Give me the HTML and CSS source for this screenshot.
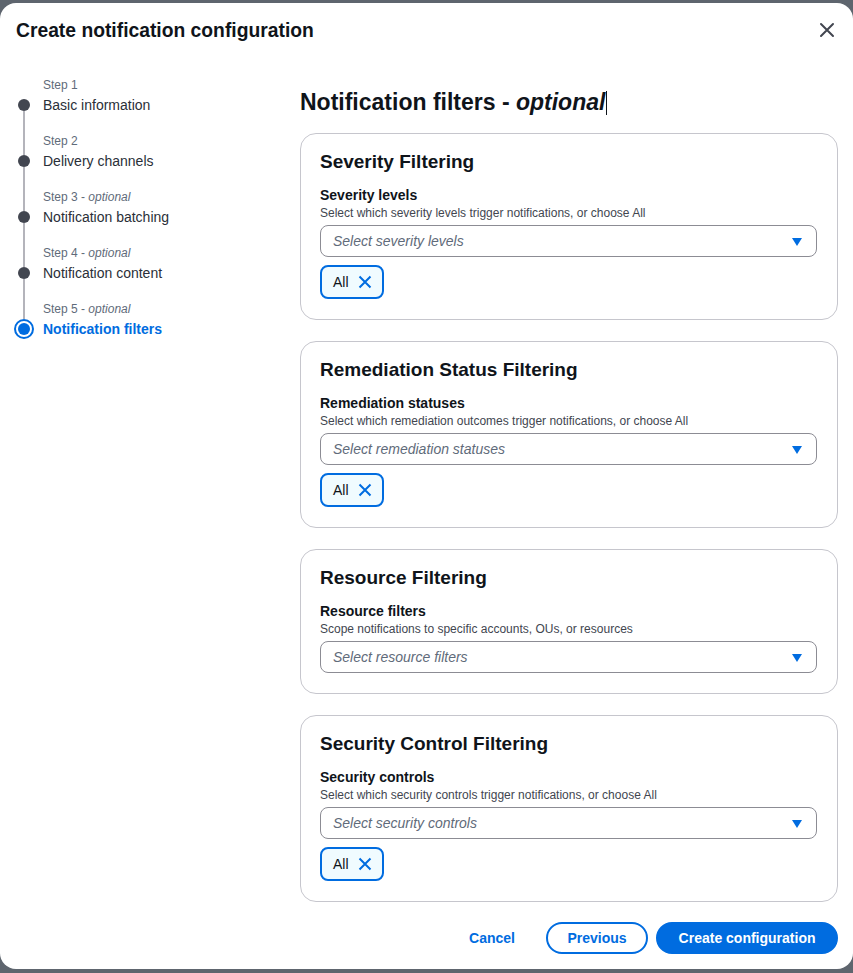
FILE: index.html
```html
<!DOCTYPE html>
<html lang="en">
<head>
<meta charset="utf-8">
<title>Create notification configuration</title>
<link rel="stylesheet" href="styles.css">
</head>
<body>
<div class="backdrop">
  <div class="modal">
    <header class="modal-header">
      <h1 class="modal-title">Create notification configuration</h1>
      <button class="close-btn" aria-label="Close">
        <svg width="16" height="16" viewBox="0 0 16 16"><path d="M2 2 L14 14 M14 2 L2 14" stroke="#424650" stroke-width="2" fill="none" stroke-linecap="round"/></svg>
      </button>
    </header>
    <div class="modal-body">
      <nav class="stepper">
        <div class="step">
          <div class="rail"><span class="seg seg-top seg-hidden"></span><span class="dot"></span><span class="seg seg-bottom"></span></div>
          <div class="step-text">
            <div class="step-label">Step 1</div>
            <div class="step-title">Basic information</div>
          </div>
        </div>
        <div class="step">
          <div class="rail"><span class="seg seg-top"></span><span class="dot"></span><span class="seg seg-bottom"></span></div>
          <div class="step-text">
            <div class="step-label">Step 2</div>
            <div class="step-title">Delivery channels</div>
          </div>
        </div>
        <div class="step">
          <div class="rail"><span class="seg seg-top"></span><span class="dot"></span><span class="seg seg-bottom"></span></div>
          <div class="step-text">
            <div class="step-label">Step 3 - <i>optional</i></div>
            <div class="step-title">Notification batching</div>
          </div>
        </div>
        <div class="step">
          <div class="rail"><span class="seg seg-top"></span><span class="dot"></span><span class="seg seg-bottom"></span></div>
          <div class="step-text">
            <div class="step-label">Step 4 - <i>optional</i></div>
            <div class="step-title">Notification content</div>
          </div>
        </div>
        <div class="step step-active">
          <div class="rail"><span class="seg seg-top seg-short"></span><span class="ring"><span class="ring-dot"></span></span></div>
          <div class="step-text">
            <div class="step-label">Step 5 - <i>optional</i></div>
            <div class="step-title">Notification filters</div>
          </div>
        </div>
      </nav>

      <main class="content">
        <h2 class="page-heading">Notification filters - <i>optional</i><span class="caret-line"></span></h2>

        <section class="card">
          <h3 class="card-title">Severity Filtering</h3>
          <div class="field">
            <div class="field-label">Severity levels</div>
            <div class="field-desc">Select which severity levels trigger notifications, or choose All</div>
            <div class="select">
              <span class="placeholder">Select severity levels</span>
              <svg class="caret" width="12" height="12" viewBox="0 0 12 12"><polygon points="1,3 11,3 6,11" fill="#006ce0"/></svg>
            </div>
            <div class="tokens">
              <span class="token">All
                <svg width="16" height="16" viewBox="0 0 16 16"><path d="M2.5 2.5 L13.5 13.5 M13.5 2.5 L2.5 13.5" stroke="#006ce0" stroke-width="2" fill="none"/></svg>
              </span>
            </div>
          </div>
        </section>

        <section class="card">
          <h3 class="card-title">Remediation Status Filtering</h3>
          <div class="field">
            <div class="field-label">Remediation statuses</div>
            <div class="field-desc">Select which remediation outcomes trigger notifications, or choose All</div>
            <div class="select">
              <span class="placeholder">Select remediation statuses</span>
              <svg class="caret" width="12" height="12" viewBox="0 0 12 12"><polygon points="1,3 11,3 6,11" fill="#006ce0"/></svg>
            </div>
            <div class="tokens">
              <span class="token">All
                <svg width="16" height="16" viewBox="0 0 16 16"><path d="M2.5 2.5 L13.5 13.5 M13.5 2.5 L2.5 13.5" stroke="#006ce0" stroke-width="2" fill="none"/></svg>
              </span>
            </div>
          </div>
        </section>

        <section class="card">
          <h3 class="card-title">Resource Filtering</h3>
          <div class="field">
            <div class="field-label">Resource filters</div>
            <div class="field-desc">Scope notifications to specific accounts, OUs, or resources</div>
            <div class="select">
              <span class="placeholder">Select resource filters</span>
              <svg class="caret" width="12" height="12" viewBox="0 0 12 12"><polygon points="1,3 11,3 6,11" fill="#006ce0"/></svg>
            </div>
          </div>
        </section>

        <section class="card">
          <h3 class="card-title">Security Control Filtering</h3>
          <div class="field">
            <div class="field-label">Security controls</div>
            <div class="field-desc">Select which security controls trigger notifications, or choose All</div>
            <div class="select">
              <span class="placeholder">Select security controls</span>
              <svg class="caret" width="12" height="12" viewBox="0 0 12 12"><polygon points="1,3 11,3 6,11" fill="#006ce0"/></svg>
            </div>
            <div class="tokens">
              <span class="token">All
                <svg width="16" height="16" viewBox="0 0 16 16"><path d="M2.5 2.5 L13.5 13.5 M13.5 2.5 L2.5 13.5" stroke="#006ce0" stroke-width="2" fill="none"/></svg>
              </span>
            </div>
          </div>
        </section>

        <footer class="actions">
          <button class="btn btn-link">Cancel</button>
          <button class="btn btn-normal">Previous</button>
          <button class="btn btn-primary">Create configuration</button>
        </footer>
      </main>
    </div>
  </div>
</div>
</body>
</html>
```
FILE: styles.css
```css
* { box-sizing: border-box; }

html, body {
  margin: 0;
  padding: 0;
  background: #5e656e;
}

body {
  font-family: "Liberation Sans", Arial, Helvetica, sans-serif;
  color: #0f141a;
  font-size: 14px;
  line-height: 20px;
}

.backdrop {
  padding: 3px 0 4px;
  min-height: 973px;
}

.modal {
  background: #ffffff;
  border-radius: 16px;
  height: 966px;
  overflow: hidden;
}

.modal-header {
  display: flex;
  justify-content: space-between;
  align-items: center;
  padding: 17px 18px 0 16px;
}

.modal-title {
  margin: 0;
  font-size: 19.3px;
  line-height: 22px;
  font-weight: 700;
  color: #0f141a;
}

.close-btn {
  border: 0;
  background: transparent;
  padding: 0;
  width: 16px;
  height: 16px;
  display: flex;
  margin-top: -2px;
}

.modal-body {
  display: grid;
  grid-template-columns: 284px 1fr;
  padding: 35px 15px 0 16px;
}

/* Stepper */
.stepper {
  display: flex;
  flex-direction: column;
}

.step {
  display: grid;
  grid-template-columns: 16px 1fr;
  column-gap: 11px;
}

.rail {
  display: flex;
  flex-direction: column;
  align-items: center;
}

.seg {
  width: 2px;
  background: #b4b4bb;
}

.seg-top { height: 22px; }
.seg-short { height: 18px; }
.seg-bottom { flex: 1; min-height: 18px; }
.seg-hidden { visibility: hidden; }

.dot {
  width: 12px;
  height: 12px;
  border-radius: 50%;
  background: #424650;
  flex: none;
}

.ring {
  width: 20px;
  height: 20px;
  border: 2px solid #006ce0;
  border-radius: 50%;
  padding: 2px;
  flex: none;
  display: flex;
}

.ring-dot {
  width: 12px;
  height: 12px;
  border-radius: 50%;
  background: #006ce0;
}

.step-text {
  padding-bottom: 18px;
}

.step-active .step-text { padding-bottom: 0; }

.step-label {
  font-size: 12px;
  line-height: 16px;
  color: #5f6b7a;
}

.step-title {
  font-size: 14px;
  line-height: 20px;
  color: #2a2f38;
  padding-top: 2px;
}

.step-active .step-title {
  color: #006ce0;
  font-weight: 700;
}

/* Content */
.content {
  padding-top: 10px;
  display: flex;
  flex-direction: column;
}

.page-heading {
  margin: 0 0 16px;
  font-size: 23px;
  line-height: 30px;
  font-weight: 700;
  color: #0f141a;
}

.caret-line {
  display: inline-block;
  width: 1px;
  height: 24px;
  background: #0f141a;
  margin-left: 1px;
  vertical-align: -5px;
}

.card {
  border: 1px solid #c6c6cd;
  border-radius: 16px;
  padding: 16px 20px 20px 19px;
  margin-bottom: 21px;
}

.card-title {
  margin: 0 0 11px;
  font-size: 19px;
  line-height: 24px;
  font-weight: 700;
  color: #0f141a;
}

.field-label {
  font-weight: 700;
  font-size: 14px;
  line-height: 20px;
  color: #0f141a;
}

.field-desc {
  font-size: 12px;
  line-height: 16px;
  color: #424650;
  margin-bottom: 4px;
}

.select {
  height: 32px;
  border: 1px solid #8c8c94;
  border-radius: 8px;
  display: flex;
  align-items: center;
  justify-content: space-between;
  padding: 0 13px 0 12px;
}

.placeholder {
  font-style: italic;
  color: #5f6b7a;
  font-size: 14px;
}

.caret { display: block; }

.tokens {
  margin-top: 8px;
  display: flex;
}

.token {
  display: inline-flex;
  align-items: center;
  gap: 8px;
  height: 34px;
  border: 2px solid #006ce0;
  border-radius: 8px;
  background: #f0fbff;
  padding: 0 9px 0 11px;
  font-size: 14px;
  color: #0f141a;
}

.token svg { display: block; }

/* Footer */
.actions {
  display: flex;
  justify-content: flex-end;
  gap: 8px;
  margin-top: -1px;
}

.btn {
  font-family: inherit;
  font-size: 14px;
  font-weight: 700;
  line-height: 22px;
  height: 32px;
  padding: 3px 20px;
  border-radius: 20px;
  border: 2px solid transparent;
  background: transparent;
  color: #006ce0;
}

.btn-link { padding: 3px 21px; }

.btn-normal {
  border-color: #006ce0;
  background: #ffffff;
  padding: 3px 19.5px;
}

.btn-primary {
  background: #006ce0;
  border-color: #006ce0;
  color: #ffffff;
  padding: 3px 20.5px;
}
```
